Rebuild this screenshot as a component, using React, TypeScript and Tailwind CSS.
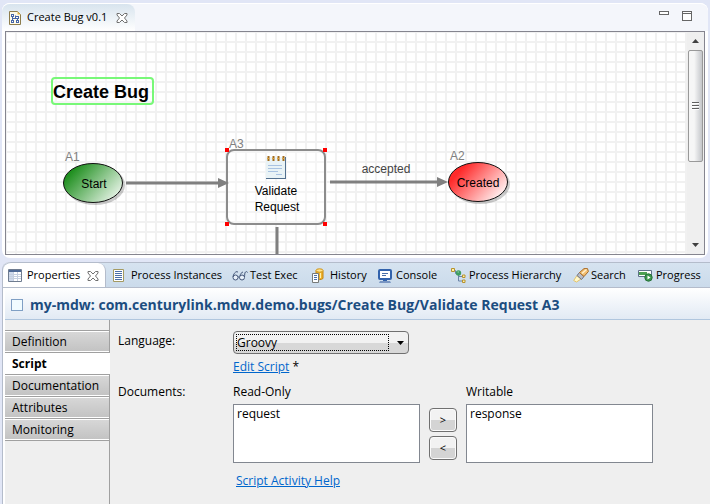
import type { ReactNode } from "react";

function CloseIcon() {
  return (
    <svg width="12" height="12" viewBox="0 0 12 12" fill="#fff" stroke="#707070" aria-hidden="true">
      <path d="M1 1.500h2.500L6 4l2.500-2.500H11V3L8.500 6 11 9v1.500H8.500L6 8l-2.500 2.500H1V9l2.500-3L1 3z" />
    </svg>
  );
}

function ProcessFileIcon() {
  return (
    <svg width="12" height="14" viewBox="0 0 12 14" aria-hidden="true">
      <path d="M.5.5h8l3 3v10H.5z" fill="#fffbe8" stroke="#8d7c4c" />
      <path d="M8.500.5l3 3h-3z" fill="#e5b74a" />
      <path d="M3.500 5v5M3.500 7.500h3M6.500 4.500v3M8.500 7v3" stroke="#4666a8" fill="none" />
      <path d="M2 3h3v3H2zM2 9h3v3H2zM6 5h4v3H6zM7 9h3v3H7z" fill="#4666a8" />
      <path d="M3 4h1v1H3zM3 10h1v1H3zM7 6h2v1H7zM8 10h1v1H8z" fill="#fff" />
    </svg>
  );
}

function PropertiesIcon() {
  return (
    <svg width="14" height="13" viewBox="0 0 14 13" aria-hidden="true">
      <path d="M.5.5h13v12H.5z" fill="#fff" stroke="#6f7c90" />
      <path d="M1 1h12v2H1z" fill="#4f6a96" />
      <path d="M1 3h4v9H1z" fill="#cfdaec" />
      <path d="M1 5.500h12M1 7.500h12M1 9.500h12M5.500 3v9M9.500 3v9" stroke="#c6d0e0" />
    </svg>
  );
}

function InstancesIcon() {
  return (
    <svg width="11" height="13" viewBox="0 0 11 13" aria-hidden="true">
      <path d="M.5.5h10v12H.5z" fill="#fff" stroke="#a49a62" />
      <path d="M2 2.500h7M2 4.500h7M2 6.500h7M2 8.500h7M2 10.500h7" stroke="#4a6ea8" />
    </svg>
  );
}

function GlassesIcon() {
  return (
    <svg width="16" height="12" viewBox="0 0 16 12" fill="none" stroke="#46587a" aria-hidden="true">
      <ellipse cx="3.500" cy="7.500" rx="2.500" ry="2.500" fill="#e8f0fa" />
      <ellipse cx="10" cy="7.500" rx="2.500" ry="2.500" fill="#e8f0fa" />
      <path d="M6 7h1.500M1 7c.3-3 2-5 4-5.500l1 .8M12.500 7c.3-2.500 0-4 1-5 .8-.7 1.700-.5 2 .5M8 6c.5-2.500 1.500-3.500 3-4" />
    </svg>
  );
}

function HistoryIcon() {
  return (
    <svg width="12" height="15" viewBox="0 0 12 15" aria-hidden="true">
      <path d="M4 2.500v8c2 1.500 5 1.500 7 0v-8z" fill="#eeb22e" stroke="#c48410" />
      <ellipse cx="7.500" cy="2.500" rx="3.500" ry="1.700" fill="#ffe38a" stroke="#cf951c" />
      <path d="M8.500 5v5" stroke="#fff0ae" />
      <path d="M.5 5.500h6v9h-6z" fill="#fff" stroke="#777a78" />
      <path d="M2 7.500h3M2 9.500h3M2 11.500h3" stroke="#4a6ea8" />
    </svg>
  );
}

function ConsoleIcon() {
  return (
    <svg width="14" height="14" viewBox="0 0 14 14" aria-hidden="true">
      <rect x="1" y="1" width="12" height="9" rx="1" fill="#fff" stroke="#3262ac" strokeWidth="2" />
      <path d="M4 4.500h6M4 6.500h4" stroke="#4a6ea8" />
      <path d="M5 11h4v1H5z" fill="#3262ac" />
      <path d="M2 12h10l1 2H1z" fill="#7895c2" />
    </svg>
  );
}

function HierarchyIcon() {
  return (
    <svg width="15" height="15" viewBox="0 0 15 15" fill="none" aria-hidden="true">
      <path d="M3 2.500h1.500v3H7M7.500 7v6h4M8 8.500h4" stroke="#6b84a8" />
      <path d="M.5.5h3v3h-3zM11.500 7h2.500v2.500h-2.500zM11.500 12h2.500v2.500h-2.500z" fill="#fff2a8" stroke="#b7922f" />
      <circle cx="7.500" cy="5" r="2.700" fill="#3e9d62" />
      <path d="M6.500 4h1.500" stroke="#9bd4ae" />
    </svg>
  );
}

function SearchIcon() {
  return (
    <svg width="16" height="15" viewBox="0 0 16 15" aria-hidden="true">
      <path d="M.7 12.500L4 7.500l4 3.500-4.500 3z" fill="#fff8ca" stroke="#e4c36a" />
      <path d="M4 7.500l2.500-3 4.500 4-2.500 3z" fill="#b9bcc6" stroke="#6c7284" />
      <path d="M6.500 4.500L11 .6h3.500l.9 2.900-4.400 5z" fill="#f3be71" stroke="#a86c2b" />
      <path d="M9 5.500l4.500-4" stroke="#fff0ce" strokeWidth="1.500" />
    </svg>
  );
}

function ProgressIcon() {
  return (
    <svg width="15" height="13" viewBox="0 0 15 13" aria-hidden="true">
      <path d="M.5 1.500h13v6H.5z" fill="#fff" stroke="#5e7189" />
      <path d="M1 3h8v3H1z" fill="#4da053" />
      <circle cx="10.500" cy="8.500" r="3.700" fill="#3b964c" stroke="#27723a" />
      <path d="M9.500 6.500l3 2-3 2z" fill="#fff" />
    </svg>
  );
}

function Diagram() {
  return (
    <svg className="block h-[222px] min-w-0 flex-1 font-['Liberation_Sans',Arial,sans-serif] text-xs" role="img" aria-label="Create Bug process">
      <defs>
        <pattern id="grid" x="9" y="9" width="10" height="10" patternUnits="userSpaceOnUse">
          <path d="M0 0h10v2H0zM0 2h2v8H0z" fill="#f1f1f1" />
        </pattern>
        <linearGradient id="green" x1="0" y1="0.2" x2="1" y2="0.8">
          <stop offset="0.1" stopColor="#1f8f1f" />
          <stop offset="1" stopColor="#f0f8f0" />
        </linearGradient>
        <linearGradient id="red" x1="0" y1="0.2" x2="1" y2="0.8">
          <stop offset="0.15" stopColor="#ff2a2a" />
          <stop offset="0.95" stopColor="#fff4f4" />
        </linearGradient>
      </defs>
      <rect width="100%" height="100%" fill="#fff" />
      <rect width="100%" height="100%" fill="url(#grid)" />

      <rect x="46" y="46" width="101" height="26" rx="3" fill="#fff" fillOpacity="0.3" stroke="#78f878" strokeWidth="2" />
      <text x="47" y="66" fontSize="18" fontWeight="700">Create Bug</text>

      <g stroke="#808080" strokeWidth="3">
        <path d="M120 151h94M324 150h109M271 195v30" />
      </g>

      <g fill="#808080">
        <text x="59" y="129">A1</text>
        <text x="223" y="116">A3</text>
        <text x="444" y="128">A2</text>
      </g>

      <ellipse cx="89" cy="153" rx="30" ry="20" fill="#000" opacity="0.2" />
      <ellipse cx="87" cy="151" rx="29.500" ry="19.500" fill="url(#green)" stroke="#111" />
      <text x="88" y="156" textAnchor="middle">Start</text>

      <rect x="221" y="118" width="98" height="74" rx="7" fill="#fff" fillOpacity="0.3" stroke="#8c8c8c" strokeWidth="2" />
      <path d="M212 146l11 5-11 5zM431 145l11 5-11 5z" fill="#808080" />
      <g>
        <path d="M260 125h20v22h-20z" fill="#52708f" />
        <path d="M260 125h19v21h-19z" fill="#e9f3f6" />
        <path d="M262 133.500h14M262 136.500h14M262 139.500h10M270 142.500h6" stroke="#a9c3e2" />
        <path d="M262.500 124v5M267.500 124v5M272.500 124v5M277.500 124v5" stroke="#a36c1c" strokeWidth="2" />
        <path d="M261 126.500h18" stroke="#e0a33b" strokeDasharray="2 3" />
      </g>
      <text x="270" y="163" textAnchor="middle">Validate</text>
      <text x="271" y="179" textAnchor="middle">Request</text>
      <path d="M219 116h4v4h-4zM317 116h4v4h-4zM219 190h4v4h-4zM317 190h4v4h-4z" fill="#f00" />

      <text x="380" y="141" textAnchor="middle" fill="#444">accepted</text>

      <ellipse cx="474" cy="152" rx="30" ry="20" fill="#000" opacity="0.2" />
      <ellipse cx="472" cy="150" rx="29.500" ry="19.500" fill="url(#red)" stroke="#111" />
      <text x="472" y="155" textAnchor="middle">Created</text>
    </svg>
  );
}

function ScrollBar() {
  return (
    <div className="flex w-[17px] flex-col items-center bg-[#efefef]">
      <button aria-label="Scroll up" className="flex h-[18px] w-full items-center justify-center">
        <svg width="7" height="4" viewBox="0 0 7 4"><path d="M3.500 0L7 4H0z" fill="#404040" /></svg>
      </button>
      <div className="flex h-28 w-[15px] flex-col items-center justify-center gap-px rounded-xs border border-[#999] bg-linear-to-r from-[#f6f6f6] from-40% to-[#c4c6ca]">
        <span className="h-[2px] w-[7px] border-b border-white bg-[#606060]" />
        <span className="h-[2px] w-[7px] border-b border-white bg-[#606060]" />
        <span className="h-[2px] w-[7px] border-b border-white bg-[#606060]" />
      </div>
      <button aria-label="Scroll down" className="mt-auto flex h-[18px] w-full items-center justify-center">
        <svg width="7" height="4" viewBox="0 0 7 4"><path d="M0 0h7L3.500 4z" fill="#404040" /></svg>
      </button>
    </div>
  );
}

function EditorPanel() {
  return (
    <section className="mx-[2px] rounded-lg bg-white pb-[3px]">
      <header className="flex h-[28px] items-start rounded-t-lg border-t border-white bg-[#f4f6fb]">
        <div className="flex h-full w-[133px] items-center rounded-t-lg bg-linear-to-b from-[#d8e4ee] to-white pl-[7px]">
          <ProcessFileIcon />
          <span className="ml-[6px] flex-1 text-[11px] whitespace-nowrap">Create Bug v0.1</span>
          <button aria-label="Close Create Bug" className="mr-[7px]"><CloseIcon /></button>
        </div>
        <div className="ml-auto flex gap-[13px] pt-[7px] pr-4">
          <button aria-label="Minimize" className="h-1 w-2.5 border border-[#666] bg-white" />
          <button aria-label="Maximize" className="flex h-2.5 w-2.5 items-start border border-[#666] bg-white">
            <span className="h-[2px] w-full border-b border-[#666]" />
          </button>
        </div>
      </header>
      <div className="mx-[3px] flex border border-[#85858f]">
        <Diagram />
        <ScrollBar />
      </div>
    </section>
  );
}

function ViewTab({ icon, label, className }: { icon: ReactNode; label: string; className: string }) {
  return (
    <button className={`flex items-center whitespace-nowrap ${className}`}>
      <span className="flex w-[18px] shrink-0 items-center">{icon}</span>
      {label}
    </button>
  );
}

function ViewTabs() {
  return (
    <nav className="flex h-[26px] overflow-hidden rounded-tl-lg border-t border-b border-[#b4bccb] bg-linear-to-b from-[#d6e3f0] to-[#cbdbeb] text-[11px]">
      <div className="-mb-px flex w-[103px] shrink-0 items-center rounded-t-lg border-r border-[#b4bccb] bg-white pl-[5px]">
        <PropertiesIcon />
        <span className="ml-[5px] flex-1">Properties</span>
        <button aria-label="Close Properties" className="mr-[6px]"><CloseIcon /></button>
      </div>
      <ViewTab className="w-[119px] shrink-0 pt-px pl-[7px]" icon={<InstancesIcon />} label="Process Instances" />
      <ViewTab className="w-[80px] shrink-0 pt-px pl-[7px]" icon={<GlassesIcon />} label="Test Exec" />
      <ViewTab className="w-[66px] shrink-0 pt-px pl-[7px]" icon={<HistoryIcon />} label="History" />
      <ViewTab className="w-[73px] shrink-0 pt-px pl-[7px]" icon={<ConsoleIcon />} label="Console" />
      <ViewTab className="w-[122px] shrink-0 pt-px pl-[7px]" icon={<HierarchyIcon />} label="Process Hierarchy" />
      <ViewTab className="w-[65px] shrink-0 pt-px pl-[7px]" icon={<SearchIcon />} label="Search" />
      <ViewTab className="shrink-0 pt-px pl-[7px]" icon={<ProgressIcon />} label="Progress" />
    </nav>
  );
}

const sections = ["Definition", "Script", "Documentation", "Attributes", "Monitoring"];

function SideTabs() {
  return (
    <nav className="w-[105px] shrink-0 border-r border-[#a0a0a0] pt-[10px]">
      {sections.map((name) =>
        name === "Script" ? (
          <button key={name} className="block h-[22px] w-[105px] border-t border-[#a0a0a0] bg-white pl-[7px] text-left font-bold">
            {name}
          </button>
        ) : (
          <button
            key={name}
            className="block h-[22px] w-full border-t border-[#a0a0a0] bg-linear-to-b from-[#d8d8d8] to-[#c2c2c2] pl-[7px] text-left shadow-[inset_0_1px_#fff,inset_0_-1px_#fff]"
          >
            {name}
          </button>
        ),
      )}
      <div className="h-[2px] border-t border-[#a0a0a0]" />
    </nav>
  );
}

function DocumentList({ id, label, item }: { id: string; label: string; item: string }) {
  return (
    <div className="w-[187px]">
      <label htmlFor={id} className="block h-5 leading-4">{label}</label>
      <select id={id} multiple className="block h-[59px] w-full appearance-none overflow-hidden border border-[#828790] bg-white px-[1px] outline-none">
        <option className="px-[2px] leading-4">{item}</option>
      </select>
    </div>
  );
}

const moveButton =
  "block h-6 w-7 rounded-sm border border-[#707070] bg-linear-to-b from-[#f2f2f2] from-50% to-[#d4d4d4] to-50% text-[11px] shadow-[inset_0_0_0_1px_#fafafa]";

function ScriptForm() {
  return (
    <form className="min-w-0 flex-1 pt-[11px] pl-2">
      <div className="flex">
        <label htmlFor="language" className="w-[115px] pt-[2px] leading-4">Language:</label>
        <div>
          <div className="grid w-44">
            <select
              id="language"
              className="col-start-1 row-start-1 h-[23px] appearance-none rounded-sm border border-[#707070] bg-linear-to-b from-[#f2f2f2] from-50% to-[#d8d8d8] to-50% pl-[3px] outline-none"
            >
              <option>Groovy</option>
            </select>
            <span className="pointer-events-none col-start-1 row-start-1 my-[3px] mr-5 ml-[3px] border border-dotted border-black" />
            <svg className="pointer-events-none col-start-1 row-start-1 mr-[5px] self-center justify-self-end" width="7" height="4" viewBox="0 0 7 4">
              <path d="M0 0h7L3.500 4z" />
            </svg>
          </div>
          <div className="mt-[5px] leading-4"><a href="#script" className="text-[#0066cc] underline">Edit Script</a> *</div>
        </div>
      </div>
      <div className="mt-[9px] flex">
        <span className="w-[115px] leading-4">Documents:</span>
        <div>
          <div className="flex">
            <DocumentList id="readonly" label="Read-Only" item="request" />
            <div className="mx-[9px] flex flex-col gap-1 pt-6">
              <button type="button" aria-label="Make writable" className={moveButton}>&gt;</button>
              <button type="button" aria-label="Make read-only" className={moveButton}>&lt;</button>
            </div>
            <DocumentList id="writable" label="Writable" item="response" />
          </div>
          <a href="#help" className="mt-[10px] ml-[3px] inline-block leading-4 text-[#0066cc] underline">Script Activity Help</a>
        </div>
      </div>
    </form>
  );
}

export default function App() {
  return (
    <main className="flex min-h-screen flex-col gap-[4px] overflow-hidden bg-[#e1e6f6] pt-[3px] font-['Open_Sans','Noto_Sans',sans-serif] text-xs text-black">
      <EditorPanel />
      <section className="ml-[2px] flex flex-1 flex-col rounded-tl-lg border-l border-[#b4bccb] bg-white">
        <ViewTabs />
        <h1 className="ml-[2px] flex h-8 items-center gap-[7px] border-b border-[#b0c6de] bg-linear-to-b from-white to-[#e2eaf4] pt-[2px] pl-[6px] text-sm font-bold whitespace-nowrap text-[#1c4d80]">
          <span className="h-3 w-3 border border-[#7f9fc4] bg-[#f0fbff]" />
          my-mdw: com.centurylink.mdw.demo.bugs/Create Bug/Validate Request A3
        </h1>
        <div className="ml-[2px] flex flex-1 bg-[#efefef]">
          <SideTabs />
          <ScriptForm />
        </div>
      </section>
    </main>
  );
}
